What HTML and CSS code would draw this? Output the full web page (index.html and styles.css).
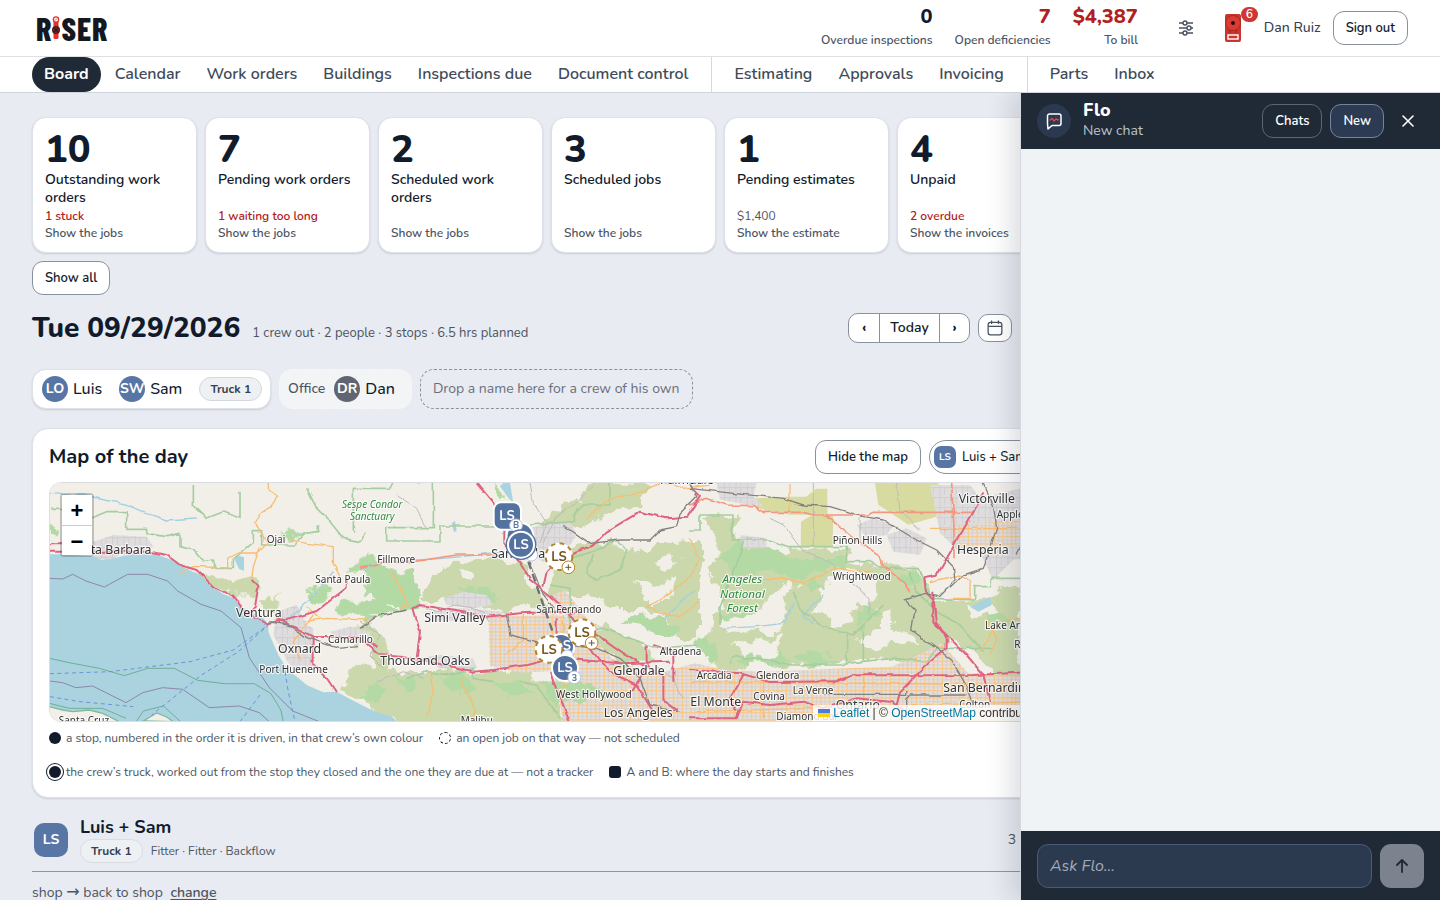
FILE: index.html
```html
<!DOCTYPE html>
<html lang="en">
<head>
<meta charset="utf-8">
<title>Riser – Board</title>
<link rel="stylesheet" href="styles.css">
</head>
<body>
<header class="topbar">
  <a class="logo" href="#" aria-label="Riser">
    <span>R</span>
    <svg class="logo-i" viewBox="0 0 16 48" aria-hidden="true">
      <rect x="3" y="2" width="10" height="44" rx="3" fill="#e2312d"/>
      <circle cx="8" cy="7" r="6.500" fill="#e2312d"/><circle cx="8" cy="7" r="4" fill="#fff"/>
      <path d="M6 9l4-4" stroke="#e2312d" stroke-width="2"/>
      <circle cx="8" cy="28" r="8" fill="#4b1717"/>
      <path d="M2 28h12M8 22v12" stroke="#c02a28" stroke-width="2"/><circle cx="8" cy="28" r="3" fill="#191c22"/>
    </svg>
    <span>S</span><span>E</span><span>R</span>
  </a>
  <div class="stats">
    <div class="stat"><b>0</b><span>Overdue inspections</span></div>
    <div class="stat stat-bad"><b>7</b><span>Open deficiencies</span></div>
    <div class="stat stat-bad"><b>$4,387</b><span>To bill</span></div>
  </div>
  <button class="icon-btn" aria-label="Settings">
    <svg width="16" height="16" viewBox="0 0 16 16" fill="none" stroke="#47515f" stroke-width="1.4"><path d="M1 3h4M9 3h6M1 8h8M13 8h2M1 13h4M9 13h6"/><circle cx="7" cy="3" r="2"/><circle cx="11" cy="8" r="2"/><circle cx="7" cy="13" r="2"/></svg>
  </button>
  <button class="alarm" aria-label="Alerts">
    <svg width="18" height="30" viewBox="0 0 18 30"><rect x="1" y="1" width="16" height="28" rx="2" fill="#c9352f"/><circle cx="9" cy="10" r="7.5" fill="#dc3b34" stroke="#a82a26"/><circle cx="9" cy="10" r="2" fill="#2a1012"/><path d="M6 17v3M12 17v3" stroke="#94231f"/><rect x="4" y="22" width="10" height="4" fill="#c9352f" stroke="#fff" stroke-width="1.4"/></svg>
    <span class="badge">6</span>
  </button>
  <span class="user">Dan Ruiz</span>
  <button class="btn">Sign out</button>
</header>
<nav class="nav">
  <a class="active" href="#">Board</a><a href="#">Calendar</a><a href="#">Work orders</a><a href="#">Buildings</a><a href="#">Inspections due</a><a href="#">Document control</a>
  <i class="sep"></i>
  <a href="#">Estimating</a><a href="#">Approvals</a><a href="#">Invoicing</a>
  <i class="sep"></i>
  <a href="#">Parts</a><a href="#">Inbox</a>
</nav>
<div class="stage">
<main class="board">
  <section class="cards">
    <button class="card"><b>10</b><span class="label">Outstanding work orders</span><span class="note bad">1 stuck</span><span class="more">Show the jobs</span></button>
    <button class="card"><b>7</b><span class="label">Pending work orders</span><span class="note bad">1 waiting too long</span><span class="more">Show the jobs</span></button>
    <button class="card"><b>2</b><span class="label">Scheduled work orders</span><span class="note"></span><span class="more">Show the jobs</span></button>
    <button class="card"><b>3</b><span class="label">Scheduled jobs</span><span class="note"></span><span class="more">Show the jobs</span></button>
    <button class="card"><b>1</b><span class="label">Pending estimates</span><span class="note plain">$1,400</span><span class="more">Show the estimate</span></button>
    <button class="card"><b>4</b><span class="label">Unpaid</span><span class="note bad">2 overdue</span><span class="more">Show the invoices</span></button>
  </section>
  <button class="btn show-all">Show all</button>

  <section class="day">
    <h1>Tue 09/29/2026</h1>
    <p>1 crew out · 2 people · 3 stops · 6.5 hrs planned</p>
    <div class="pager"><button aria-label="Previous day"><span>‹</span></button><button>Today</button><button aria-label="Next day"><span>›</span></button></div>
    <button class="cal" aria-label="Pick a date"><svg width="16" height="16" viewBox="0 0 14 14" fill="none" stroke="#47515f" stroke-width="1.1"><rect x="1" y="2" width="12" height="11" rx="2"/><path d="M1 5.500h12M4 .5v3M10 .5v3"/></svg></button>
  </section>

  <section class="crews">
    <div class="crew"><span class="face">LO</span><span class="who">Luis</span><span class="face">SW</span><span class="who">Sam</span><span class="tag">Truck 1</span></div>
    <div class="crew office"><span class="place">Office</span><span class="face gray">DR</span><span class="who">Dan</span></div>
    <div class="crew drop">Drop a name here for a crew of his own</div>
  </section>

  <section class="panel">
    <div class="panel-head"><h2>Map of the day</h2><button class="btn">Hide the map</button><button class="chip"><span class="mini">LS</span>Luis + Sam</button></div>
    <div class="map">
      <svg class="map-art" viewBox="60 174 2982 714" preserveAspectRatio="xMinYMin slice" role="img" aria-label="Map of Los Angeles and Ventura">
        <defs>
          <pattern id="streets" width="26" height="22" patternUnits="userSpaceOnUse"><rect width="26" height="22" fill="#e4e0dd"/><path d="M0 16h26M19 0v22" stroke="#c9cad3" stroke-width="2"/><path d="M0 5h26M7 0v22" stroke="#f8c88c" stroke-width="4"/></pattern>
          <pattern id="blocks" width="34" height="30" patternUnits="userSpaceOnUse"><rect width="34" height="30" fill="#dedcdd"/><path d="M0 8h34M10 0v30M24 8v22" stroke="#c9c7cc" stroke-width="2"/></pattern>
          <filter id="rough" x="0" y="0" width="1" height="1"><feTurbulence type="fractalNoise" baseFrequency=".02" numOctaves="4" seed="4"/><feDisplacementMap in="SourceGraphic" scale="60" xChannelSelector="R" yChannelSelector="G"/></filter>
          <filter id="winding" x="0" y="0" width="1" height="1"><feTurbulence type="fractalNoise" baseFrequency=".03" numOctaves="2" seed="9"/><feDisplacementMap in="SourceGraphic" scale="12" xChannelSelector="R" yChannelSelector="G"/></filter>
        </defs>
        <rect x="60" y="174" width="2990" height="720" fill="#f2efe9"/>
        <g class="wood" filter="url(#rough)">
          <path d="M480 440l60 10 60 15 70 5 10 30-70 5-50-10-45-25zM690 520l30-14 20 15 20-18-20 60-40-10zM910 800l60-60 50-20v-80l-40 20-20-40 50-30 60 50 0 210z"/>
          <path class="lush" d="M60 310l15 5-5 25-10 5zM830 510l50-30 30 10-40 40-20 15zM920 560l40-30 60-8 50 10-20 30-60 15zM950 440l40-40 30-10 10 40-60 20zM750 330l30-10 50 10-20 10zM1000 430l50-20 40 30 60 0 10 60-70 20-80-30zM1080 480l90 10-10 60-50 20z"/>
          <g transform="translate(990 135)">
            <path d="M180 385l60-80 60-30 70-5 60-8 50 30 40 60 40 30 45 55-65 5-40-45-70 30-80-25-80-10-90-5zM520 180v-25l80-40 80-60 80-17h110l-20 70-110 30-100 40z"/>
            <path d="M575 300l60-60 60-25 60 2 50 28 55-10 60-20 100 0v290l-60-5-60-80-110 0-90-40-135-10zM670 500l60-30 100 40 40 50-60 20-90-40z"/>
            <path d="M0 690l40-60 60-30 80 8 80-10 100 10 120-14 80 40 30 70 30 60H180l-80-15z"/>
            <path class="lush" d="M0 695l20-50 40-15 20 30-30 40zM110 620l50 0 10 30-40 30zM230 630l80-20 40 40-60 20zM400 640l80-10 40 40-70 10zM540 640l60 0 30 50-50 20zM300 350l90 10 30 25-70 15zM780 440l120 0 70 40-20 20-90-15zM0 340l70 10 60 40-60 30zM400 50l10-20 30 45-10 30zM0 440l20-10 30 10-20 20zM40 420l60-10 20 20-60 10z"/>
            <path class="clear" d="M300 300l50 10-10 15-30 0zM820 330l60 20 60-20-20 60-70 0zM880 270l60-20 20 20-40 30z"/>
          </g>
          <g transform="translate(1980 0)">
            <path d="M28 270h97l20 80 110 25 70-5 145 3 3 30 120 25 85-4 15 30 40 65 100 10 160-45 0 290-60-10-60-60-80-60-60 40-80 40-80-30-70 15-110 0-60 20-110-15-110 20-80-50 40-90 30-80-50-40-10-60 30-80z"/>
            <path class="lush" d="M150 360l90 0 90 45 140-5 0 30-60 10-40-10-60 40-70-40-50 20-70-10-30-50zM90 580l80-30 20 30-60 25zM0 650l60-10 40 60-60 10zM500 560l50-20 10 40-60 30zM620 440l60 0 20 30-30 20zM840 560l110 10 30 40-80-20zM130 690l110-20 60 40-120 10zM330 480l40-20 40 20-50 20zM300 690l80-10 60 30-90 10z"/>
            <path class="clear" d="M280 480l40 5-30 40 0 50-30 50-120-5-50-20 40-20 60-10zM390 500l50-70 60 0 60 60-10 60-50-10-20 50-50 10-60-40 40-30zM530 620l70-20 60 20 50 35-80 0-40 10-80-5zM120 660l120-20 30-10-10 60-60 20zM840 540l60 0 30 30-80 10zM30 330l40-10 20 60-30 80-30-40zM560 560l30-10 10 60-20 20z"/>
          </g>
        </g>
        <path class="dry" transform="translate(1980 0)" d="M198 220l100-5 50 0 30-24h34v78H300l-100-20zM333 290l30-18 66 0 0 95h-97zM555 174h190l0 100-90 25-90-60zM760 250l60 0 0 70-60-10z"/>
        <g fill="url(#blocks)">
          <path d="M190 350l60-20 100 5 20 30-40 20-60 5-30 18-50-10z M740 560l60-20 30 60 20 10 0 120-60 10-60-110zM900 620l60-15 60 15 0 30-80 5zM1240 520l60-20 70 10 20 30-60 10-80-10zM1180 560l120-10 120 10-10 20-200 10zM1160 700l70-10 100 10 10 30-110 0zM1470 320l60-20 90-10 20 40-40 60-60 20-60-30z"/>
          <path d="M2060 174l120 0-10 40 30 30-20 0-110-20zM2130 330l80 10 0 30-70 0zM2480 300l50-20 60 20-20 30-60 10zM2570 330l60-20 60 30-20 50-80-10zM2700 180l120 0 30 40 190-46v220l-90 10-60 60-40-80-60 0-60-60z"/>
        </g>
        <g fill="url(#streets)">
          <path d="M1375 575l210-5 70 20 90 110 120 50 130-35 90 20 120 5 240-10 140-5 90-40 60-30 80 90 225 10v133H1600l-30-150-100 5-90-20zM2760 300l280-20v40l-140 70-120-20zM1555 515l50-20 70 90 60 30-80 10z"/>
        </g>
        <g class="wood" filter="url(#rough)">
          <path d="M1680 630l60-20 90 40 50 50-50 20-90-40z"/>
          <path class="lush" d="M1570 770l30 10 50-10 60 20 30 20-60 0-40 30-50-10zM1780 700l20 0 30 20-20 10zM2420 850l60-20 20 20-40 20z"/>
        </g>
        <path class="sea" d="M58 388h37l95 6 25 11 30-3 55-14 70 0 30 7 40 15 30 22 40 18 30 25 35 30 35 15 30 28 60 32 15 20 0 20 30 70 25 40 60 50 50 22 40-2 40 22 75 38 50 14 20 18 40-2 70 12 120 4v20H58z"/>
        <g class="isle"><path d="M58 845l40 10 30 5 50-5 40 10 50 25H58zM340 888l20-12 20-12 30 12 20 14z"/></g>
        <path class="lake" d="M612 400l15-8 15 5 0 40-15-5zM1410 184l10-10 20 0 10 60-15-15zM1265 295l10-8 5 30-8 5zM2820 545l60-30 5 25-40 20z"/>
        <g filter="url(#winding)">
        <g class="stream"><path d="M60 205l50 5 60 0 50 15 60 10 70 30 60 20 90-6M770 590l30-30 60-60 50-60M990 435l70-25 100-5 80-5 100-10 80-10M1900 580l100-90M2080 610l100-5 80-10 30-60M2350 600l-30-30 60-60"/></g>
        <g class="local"><path d="M1500 174l10 60 40 60-20 60M1100 210l60 40 30 60M1700 174l-60 60-60 40-40 80M990 590l60 40-30 60 40 40M1160 540l60 20 60-20 80 20 20 30M1040 770l80-30 60 20M1870 720l60 40 30 60M2220 280l40 20 60 80 80 30 60 60 60 50 0 50M2490 280v70M2350 174l0 190M2600 174l10 80 60 60M2960 640l60-40"/></g>
        <g class="bound">
          <path d="M60 250l60 0 0 30 60 0 50-20h60l0 50 60 0 0 15 60 10 40-10 0 40 40 10 30 35 30-5 10 25 50 0 0-30 60-50 0-30 25 0 0 40 100 0 30-35 40-5 0-20M490 180l0 60 40 40 50-20 50 20 0-80M830 190l30 60 40 40 40 50 50 10 20-30"/>
          <path d="M970 320v-130h110l10-20 80 0 40-12 0 150h-140v40h160v-45h200M1500 300l130-10 0-20 30-30h80l0-80 100 0 40-60M1560 370l60 30 80-25 60-30 30 30-20 60-70 30-30-20 20-60M1560 480l60 10 0 120 100 0 160 60 120-10M1130 760l60-20 60 10 80-20 0 30 60 10M1470 770l50 10 40 60 30 40"/>
          <path d="M1980 315h30v-45h96v75h110l60 20h173v45l70 0 50 20h95l40 90 130 5v-40h50l0-25h156M2100 715l10-20 110 10 60 15 150 0 60-10 100-10 100 10 30-40 50 0 120 0M2450 620v95M2500 620l0 90M2140 350l-20 70-30 70-20 60 0 50M2290 500l20 50 60 50 100 30 30-30 60-60M2640 440l20 60 60 60 70 40 70 80"/>
        </g>
        <g class="line-orange">
          <path d="M715 174l0 20 28 20-20 30-30 20-20 30 20 30 20 30-30 30-60 0-30 15 0 30-100-5-50 20M690 365l-20 60-5 40M780 345l50 10 80 10 0 50 25 50M820 590l70-10 130 5M870 580l-40-35M850 570l-60 80 20 60"/>
          <path d="M1085 440l30 60 20 40-30 10M1200 740l10 70-20 60M1290 760l50 100-30 28M1600 570l0 300M1480 570l0 80-60 40M1670 280l70-60 100-20 60-30 60 20 80-10M1980 340l30 65-40 60-80 60-40 20 40 20 60 10 60-50M2970 580l-60 10-60 90"/>
          <path d="M2200 464l60-5 60 15 40-20 60-25 50 10 60 0M2280 174v86M2700 470l90-20 30 20 0 50-60 0M2870 580l30 60-20 50M2000 860l1040-30M1980 770l1060 10M2200 740v140M2500 740v140M2800 740v140M2700 310h340"/>
        </g>
        <g class="line-salmon"><path d="M1980 240l50-20 60 20 80 2 30 20 120 0 30 8h160l20-8h300M2390 272l70 60 90 60 10 30 60 50 20 30M2765 174l7 136v90M990 430l80-20 80 0 130-20 140 0"/></g>
        <g class="line-pink">
          <path d="M60 355h110M60 380l300 0 50 10 40 30 50 15 50 50 60 30 40 50 60 30 70-12 80-25 90-70 0-20M665 465l20 20-10 60-20 20M740 580l80 40 30 16h45l90 0 60 30M848 636l0 80 40 40 30 45"/>
          <path d="M1340 174l50 60 30 70 0 50 50 60 30 50 60 50 50 40 40 60 60 20 70 50 120 70 0 70 40 30M1540 485l10-45 40-40 100-40 40-40 100-60 80 20 60-5 40-60-20-20M990 640l60 50 60 5 60 10 100 20 60 15 60-5 100-15 80-20 80 5 120 10 150-5M1160 700l10-80-20-70 20-10 120 20 80 15 100-10 120-5 60 5M1580 580v60M1630 590l60 90 50 60 80 40 50 80M1570 770l50 120M1850 660v70l-60 90M1870 660l60 20 0 90M1570 770l-10-30"/>
          <path d="M1980 735l150 10 90 26 200-2 50-18 360-1 200-10 140 12M2140 750l-40 70 20 40M2600 840l10-40 90-90 50-40 0-30-30-50-5-60-30-30-5-40 40-8 110-190 30-60M2710 500l0 90 50 50 50 50 50 60 20 80M1980 880l140 0 20-50 80 10 100-10 60 20 100-30 100 10 40 20"/>
        </g>
        <g class="rail">
          <path d="M715 590l60 10 60 40 90 30 60-5M990 610l60-40 80-15M1500 410l30 80 40 60M1430 570l10 60 80 20 180 20 70 30 60 60 30 80 90 20M1600 300l80 55 90-10 90 0 30-30 50-10 10-40 50-50-30-60M1980 190l130 15 150 15 60 20 80 5 100 30 60 10 100 60 60 30 50 50 5 40-50 50-40-10-60 20 30 30-10 60 40 30 80 60 40 70 30 80M2760 490l40-40 60-20 20-60 20-60-10-70-30-66M2960 390l20-40 60 0M2380 808h250l0-10M2630 880v-60l10-10h170"/>
        </g>
        </g>
        <g class="purple"><path d="M58 460l40 2 30-14 40 20 55 18 70-38 60 0 60 20 30 30 70 40 60 20 60 50 25 90 60 90 70 70 100 40M58 768l40 5 40 15 50-5 100 50 50-30 60-15 60 5 80 55 90-5 60 20 50 45"/></g>
        <g class="seagreen"><path d="M58 700l70 15 80 15 75 22 70-22 80 0 70 36 80 10h90l50 30 30 50 10 50M58 835l60 15 100 0 70 30M320 888l20-30 60-15 50 45"/></g>
        <g class="ferry"><path d="M60 746l180-6 240-30 130-35 105-75-90 80-110 70-150 120M690 810l-60 80M765 740l10 60 20 90M60 815l90 15 160 15"/></g>
        <g class="places">
          <text x="182" y="386">ta Barbara</text><text class="s" x="710" y="353">Ojai</text><text class="s" x="856" y="474">Santa Paula</text><text x="618" y="576">Ventura</text><text class="s" x="894" y="653">Camarillo</text><text x="744" y="683">Oxnard</text><text class="s" x="688" y="745">Port Hueneme</text><text class="s" x="86" y="898">Santa Cruz</text>
          <text class="park" x="936" y="249">Sespe Condor</text><text class="park" x="960" y="285">Sanctuary</text>
          <g transform="translate(990 135)"><text class="s" x="52" y="279">Fillmore</text><text x="193" y="456">Simi Valley</text><text x="61" y="584">Thousand Oaks</text><text class="s" x="302" y="761">Malibu</text><text x="394" y="264">Santa Clarita</text><text class="s" x="529" y="430">San Fernando</text><text class="s" x="899" y="555">Altadena</text><text x="760" y="615">Glendale</text><text class="s" x="588" y="685">West Hollywood</text><text x="731" y="740">Los Angeles</text><text x="900" y="42">Palmdale</text></g>
          <g transform="translate(1980 0)"><text x="806" y="234">Victorville</text><text class="s" x="920" y="280">Apple Valley</text><text x="801" y="387">Hesperia</text><text class="s" x="428" y="357">Piñon Hills</text><text class="s" x="428" y="465">Wrightwood</text><text class="park l" x="157" y="475">Angeles</text><text class="park l" x="157" y="518">National</text><text class="park l" x="157" y="561">Forest</text><text class="s" x="885" y="613">Lake Arrowhead</text><text class="s" x="20" y="762">Arcadia</text><text class="s" x="198" y="762">Glendora</text><text class="s" x="308" y="808">La Verne</text><text class="s" x="190" y="826">Covina</text><text x="1" y="843">El Monte</text><text class="s" x="259" y="885">Diamond Bar</text><text x="437" y="853">Ontario</text><text class="s" x="808" y="850">Colton</text><text x="760" y="802">San Bernardino</text><text class="s" x="973" y="668">Running Springs</text></g>
        </g>
        <g class="pins" transform="translate(990 135)">
          <path class="route" d="M505 275l85 245"/>
          <circle class="blue" cx="480" cy="198" r="40"/><circle class="small" cx="515" cy="255" r="18"/>
          <rect class="blue" x="401" y="97" width="82" height="82" rx="22"/><text x="441" y="149">LS</text>
          <circle class="small" cx="468" cy="166" r="19"/><text class="t" x="468" y="175">B</text>
          <circle cx="483" cy="224" r="46" fill="#54729f"/><circle class="blue" cx="483" cy="224" r="39"/><text x="483" y="237">LS</text>
          <circle class="paper" cx="597" cy="260" r="42"/><circle class="open" cx="597" cy="260" r="40"/><text class="brown" x="597" y="273">LS</text><circle class="small br" cx="625" cy="292" r="19"/><path d="M616 292h18M625 283v18" class="plus"/>
          <circle class="blue" cx="603" cy="531" r="39"/><text x="610" y="540">LS</text>
          <circle class="paper" cx="666" cy="488" r="42"/><circle class="open" cx="666" cy="488" r="40"/><text class="brown" x="666" y="501">LS</text><circle class="small br" cx="695" cy="519" r="19"/><path d="M686 519h18M695 510v18" class="plus"/>
          <circle class="paper" cx="567" cy="538" r="42"/><circle class="open" cx="567" cy="538" r="40"/><text class="brown" x="567" y="551">LS</text><circle class="small" cx="622" cy="558" r="18"/>
          <circle class="blue" cx="615" cy="594" r="39"/><text x="615" y="605">LS</text><circle class="small" cx="643" cy="622" r="19"/><text class="t" x="643" y="632">3</text>
        </g>
      </svg>
      <div class="zoom"><button aria-label="Zoom in">+</button><button aria-label="Zoom out">−</button></div>
      <div class="credit"><svg width="12" height="8" viewBox="0 0 12 8" aria-hidden="true"><path fill="#4C7BE1" d="M0 0h12v4H0z"/><path fill="#FFD500" d="M0 4h12v4H0z"/></svg> <a href="#">Leaflet</a> | © <a href="#">OpenStreetMap</a> contributors</div>
    </div>
    <ul class="legend">
      <li><i class="dot"></i>a stop, numbered in the order it is driven, in that crew’s own colour</li>
      <li><i class="dot dashed"></i>an open job on that way — not scheduled</li>
      <li><i class="dot ringed"></i>the crew’s truck, worked out from the stop they closed and the one they are due at — not a tracker</li>
      <li><i class="dot square"></i>A and B: where the day starts and finishes</li>
    </ul>
  </section>

  <section class="run">
    <span class="avatar">LS</span>
    <div class="run-text"><h3>Luis + Sam</h3><div class="run-sub"><span class="tag light">Truck 1</span><span>Fitter · Fitter · Backflow</span></div></div>
    <span class="count">3 stops</span>
  </section>
  <p class="way">shop <span class="arrow">→</span> back to shop <a href="#">change</a></p>
</main>

<aside class="chat">
  <header class="chat-head">
    <span class="chat-face"><svg width="18" height="18" viewBox="0 0 18 18" fill="none" stroke-linejoin="round" stroke-linecap="round"><path d="M4.500 2h9.500a2 2 0 0 1 2 2v7.500a2 2 0 0 1-2 2H7L3 17l-.5-5V4a2 2 0 0 1 2-2z" stroke="#fff" stroke-width="1.500"/><path d="M5 8l2-1.500L9 9l2-2 2.500 1" stroke="#e2453f" stroke-width="1.400"/></svg></span>
    <div class="chat-title"><h2>Flo</h2><p>New chat</p></div>
    <button class="dark-btn">Chats</button><button class="dark-btn on">New</button>
    <button class="close" aria-label="Close"><svg width="12" height="12" viewBox="0 0 12 12" stroke="#fff" stroke-width="1.600" stroke-linecap="round"><path d="M1 1l10 10M11 1L1 11"/></svg></button>
  </header>
  <div class="chat-body"></div>
  <form class="chat-foot">
    <input type="text" placeholder="Ask Flo…" aria-label="Ask Flo">
    <button type="button" aria-label="Send"><svg width="14" height="14" viewBox="0 0 14 14" fill="none" stroke="#1e2936" stroke-width="1.800" stroke-linecap="round" stroke-linejoin="round"><path d="M7 13V1M2 6l5-5 5 5"/></svg></button>
  </form>
</aside>
</div>
</body>
</html>
```
FILE: styles.css
```css
:root {
  --font: Nunito, "Open Sans", sans-serif;
  --ink: #111b2b;
  --mute: #4b5563;
  --bad: #b02020;
  --blue: #5876a5;
  --dark: #1f2a36;
}
* { box-sizing: border-box; }
body { margin: 0; height: 100vh; display: flex; flex-direction: column; overflow: hidden; font: 14px/18px var(--font); color: var(--ink); background: #e8ebf1; }
button, input { font: inherit; color: inherit; }
button { padding: 0; border: 0; background: none; cursor: pointer; white-space: nowrap; }
h1, h2, h3, p, ul { margin: 0; padding: 0; }

.topbar { height: 57px; flex: none; display: flex; align-items: center; padding: 0 32px; background: #fff; border-bottom: 1px solid #dde0e5; }
.logo { display: flex; align-items: center; gap: 1px; margin-left: 4px; font: 800 32px/30px "Barlow Condensed", "Roboto Condensed", "Liberation Sans Narrow", Lato, sans-serif; color: #15181e; text-decoration: none; }
.logo-i { width: 8px; height: 24px; }
.stats { display: flex; gap: 22px; margin-left: auto; }
.stat { display: flex; flex-direction: column; align-items: flex-end; gap: 3px; margin-bottom: 1px; font-size: 12px; font-weight: 600; color: #4b5563; }
.stat b { font-size: 20px; line-height: 22px; font-weight: 800; color: var(--ink); }
.stat-bad b { color: var(--bad); }
.icon-btn { width: 32px; height: 32px; margin-left: 32px; display: grid; place-items: center; }
.alarm { position: relative; margin-left: 22px; height: 30px; }
.alarm svg { display: block; }
.badge { position: absolute; left: 17px; top: -6px; width: 17px; height: 15px; border-radius: 8px; background: #cf3733; color: #fff; font-size: 12px; line-height: 15px; font-weight: 600; }
.user { margin: 0 12px 0 22px; font-weight: 500; color: #374151; }
.btn { height: 34px; padding: 0 12px; border: 1px solid #8a919e; border-radius: 11px; background: #fff; font-size: 13px; font-weight: 600; }

.nav { height: 36px; flex: none; display: flex; gap: 2px; padding: 0 32px; background: #fff; border-bottom: 1px solid #d0d4db; font-size: 16px; font-weight: 600; }
.nav a { padding: 0 12px; line-height: 34px; color: #414b59; text-decoration: none; white-space: nowrap; }
.nav .active { background: var(--dark); color: #fff; font-weight: 700; border-radius: 18px; }
.sep { width: 1px; margin: 0 8px 0 9px; background: #d5d8de; }

.stage { flex: 1; min-height: 0; position: relative; overflow: hidden; }
.board { padding: 24px 32px 0; margin-right: 346px; }
.cards { display: grid; grid-template-columns: repeat(6, 1fr); gap: 8px; }
.card { display: flex; flex-direction: column; align-items: flex-start; padding: 12px 12px 10px; text-align: left; white-space: normal; background: #fff; border: 1px solid #dde1e9; border-radius: 14px; box-shadow: 0 1px 2px rgba(20, 30, 50, .14); font-size: 12px; line-height: 17px; color: var(--mute); }
.card b { font-size: 38px; line-height: 38px; margin: 1px 0 2px; font-weight: 800; color: var(--ink); }
.card .label { min-height: 37px; font-size: 14px; line-height: 18px; color: var(--ink); font-weight: 600; }
.card .note { min-height: 17px; font-weight: 600; }
.card .plain { font-weight: 400; }
.card .more { font-weight: 600; }
.card .bad { color: var(--bad); }
.show-all { display: block; margin-top: 8px; }

.day { display: flex; align-items: center; margin-top: 18px; margin-right: 50px; height: 30px; }
.day h1 { font-size: 28px; line-height: 30px; font-weight: 800; }
.day p { margin: 9px auto 0 12px; font-size: 13px; color: var(--mute); }
.pager { display: flex; height: 30px; border: 1px solid #8a919e; border-radius: 10px; background: #fff; font-weight: 600; }
.pager button { width: 30px; }
.pager button + button { width: 60px; border-left: 1px solid #8a919e; }
.pager button + button + button { width: 30px; }
.pager span { font-weight: 800; }
.cal { width: 34px; height: 28px; margin-left: 8px; display: grid; place-items: center; border: 1px solid #8a919e; border-radius: 10px; background: #fff; }

.crews { display: flex; gap: 8px; margin-top: 26px; }
.crew { display: flex; align-items: center; height: 40px; padding: 0 8px 0 9px; border: 1px solid #dde1e9; border-radius: 14px; background: #fff; box-shadow: 0 1px 2px rgba(20, 30, 50, .14); font-size: 16px; font-weight: 500; white-space: nowrap; }
.face { width: 26px; height: 26px; margin-right: 5px; border-radius: 50%; background: var(--blue); color: #fff; font-size: 14px; font-weight: 700; line-height: 26px; text-align: center; }
.who { margin-right: 17px; }
.tag { border: 1px solid #d3d7de; border-radius: 13px; background: #eef1f4; padding: 0 10px; height: 24px; line-height: 22px; font-size: 12px; font-weight: 700; color: #374151; }
.tag.light { border-color: #d9dde3; }
.office { padding-left: 8px; border: 1px dashed #f6f7f9; background: #f2f4f6; box-shadow: none; }
.office .who { margin-right: 8px; }
.place { margin-right: 9px; font-size: 14px; color: var(--mute); }
.gray { background: #606671; }
.drop { padding: 0 12px; border: 1px dashed #8a919e; background: none; box-shadow: none; font-size: 14px; font-weight: 400; color: #687080; }

.panel { margin-top: 19px; padding: 11px 16px 16px; border: 1px solid #dde1e9; border-radius: 16px; background: #fff; box-shadow: 0 1px 2px rgba(20, 30, 50, .14); }
.panel-head { display: flex; align-items: center; gap: 8px; }
.panel-head h2 { margin-right: auto; font-size: 20px; line-height: 24px; font-weight: 700; }
.chip { display: flex; align-items: center; height: 34px; width: 116px; padding: 0 4px; gap: 6px; border: 1px solid #8a919e; border-radius: 17px; font-size: 13px; font-weight: 500; }
.mini { width: 22px; height: 22px; border-radius: 7px; background: var(--blue); color: #fff; font-size: 10px; line-height: 22px; font-weight: 700; }
.map { position: relative; height: 240px; margin-top: 8px; border: 1px solid #dadde2; border-radius: 12px; overflow: hidden; }
.map-art { display: block; width: 100%; height: 100%; }
.zoom { position: absolute; left: 10px; top: 10px; display: flex; flex-direction: column; border: 2px solid rgba(0, 0, 0, .2); border-radius: 4px; background-clip: padding-box; }
.zoom button { width: 30px; height: 30px; padding-top: 2px; background: #fff; color: #000; font: bold 22px/28px "Liberation Sans", sans-serif; }
.zoom button + button { border-top: 1px solid #ccc; }
.credit { position: absolute; right: 0; bottom: 0; padding: 0 2px 0 5px; background: rgba(255, 255, 255, .8); color: #333; font: 12px/16px "Liberation Sans", sans-serif; white-space: nowrap; }
.credit a { color: #0078a8; text-decoration: none; }

.wood { fill: #cad8ac; }
.wood .lush { fill: #b3d9a4; }
.dry { fill: #d8dba0; }
.wood .clear { fill: #f2efe9; }
.sea, .lake { fill: #aad3df; }
.isle { fill: #f2efe9; stroke: #7fb89a; stroke-width: 4; }
.stream, .local, .bound, .line-orange, .line-salmon, .line-pink, .rail, .purple, .seagreen, .ferry { fill: none; stroke-linejoin: round; }
.stream { stroke: #a5cfe0; stroke-width: 4; }
.local { stroke: #bdb9bd; stroke-width: 3; }
.bound { stroke: #a6cda0; stroke-width: 5; }
.line-orange { stroke: #f9bd72; stroke-width: 4; }
.line-salmon { stroke: #f4977f; stroke-width: 5; }
.line-pink { stroke: #de6480; stroke-width: 6; }
.rail { stroke: #858181; stroke-width: 4; }
.purple { stroke: #8f86aa; stroke-width: 3; }
.seagreen { stroke: #6fae98; stroke-width: 3; }
.ferry { stroke: #6b93d6; stroke-width: 3; stroke-dasharray: 12 10; }
.places { font: 37px "Noto Sans", sans-serif; fill: #333; paint-order: stroke; stroke: rgba(255, 255, 255, .75); stroke-width: 7; stroke-linejoin: round; }
.places .s { font-size: 30px; }
.places .park { font-size: 30px; font-style: italic; fill: #2f8c3f; }
.places .l { font-size: 35px; text-anchor: middle; }
.pins text { font: 700 39px var(--font); fill: #fff; text-anchor: middle; }
.pins .t { font-size: 27px; fill: #54729f; }
.pins .brown { fill: #77561c; }
.blue { fill: #54729f; stroke: #fff; stroke-width: 6; }
.small { fill: #fff; stroke: #b9c5d8; stroke-width: 3; }
.small.br { stroke: #b1822c; }
.paper { fill: #fff; }
.open { fill: none; stroke: #b1822c; stroke-width: 6; stroke-dasharray: 14 13; }
.plus { stroke: #77561c; stroke-width: 3; }
.route { stroke: #6e7274; stroke-width: 7; stroke-dasharray: 24 15; }

.legend { display: flex; flex-wrap: wrap; gap: 16px; padding-top: 7px; list-style: none; font-size: 12px; color: var(--mute); }
.legend li { display: flex; align-items: center; gap: 5px; }
.dot { width: 12px; height: 12px; border-radius: 50%; background: var(--ink); }
.dashed { background: none; border: 1px dashed var(--ink); }
.ringed { box-shadow: 0 0 0 2px #fff, 0 0 0 3px var(--ink); }
.square { border-radius: 3px; }

.run { display: flex; align-items: center; margin-top: 18px; padding: 0 8px 8px 2px; border-bottom: 1px solid #8f949f; }
.avatar { width: 34px; height: 34px; margin-right: 12px; border-radius: 10px; background: var(--blue); color: #fff; font-weight: 700; line-height: 34px; text-align: center; }
.run h3 { font-size: 18px; line-height: 22px; margin-bottom: 1px; }
.run-sub { display: flex; align-items: center; gap: 8px; font-size: 12px; color: var(--mute); }
.count { margin-left: auto; color: var(--mute); }
.way { margin-top: 11px; color: var(--mute); }
.arrow { font: 16px/16px "Noto Sans", "DejaVu Sans", sans-serif; }
.way a { margin-left: 4px; color: inherit; font-weight: 600; text-underline-offset: 2px; }

.chat { position: absolute; top: 0; right: 0; bottom: 0; width: 420px; display: flex; flex-direction: column; background: #eff3f6; border-left: 1px solid #d5d9df; box-shadow: -8px 0 24px rgba(30, 40, 55, .16); color: #fff; }
.chat-head { display: flex; align-items: center; height: 56px; padding: 0 16px; background: var(--dark); }
.chat-face { width: 34px; height: 34px; margin-right: 12px; border-radius: 50%; display: grid; place-items: center; background: #2b3950; }
.chat-title { margin-right: auto; }
.chat-title h2 { font-size: 18px; line-height: 20px; font-weight: 800; }
.chat-title p { line-height: 22px; color: #bcc3cd; }
.dark-btn { height: 34px; margin-right: 8px; padding: 0 12px; border: 1px solid #5c6674; border-radius: 11px; font-size: 13px; font-weight: 600; }
.dark-btn.on { background: #2d3b52; border-color: #7583a0; }
.close { width: 32px; height: 32px; display: grid; place-items: center; }
.chat-body { flex: 1; }
.chat-foot { display: flex; gap: 8px; padding: 13px 16px 12px; background: var(--dark); }
.chat-foot input { flex: 1; min-width: 0; height: 44px; padding: 0 12px; border: 1px solid #4a5b78; border-radius: 11px; background: #2c3a50; font-size: 16px; }
.chat-foot input::placeholder { color: #a3abb9; font-style: italic; opacity: 1; }
.chat-foot button { width: 44px; height: 44px; border-radius: 11px; background: #7c828e; display: grid; place-items: center; }
```
